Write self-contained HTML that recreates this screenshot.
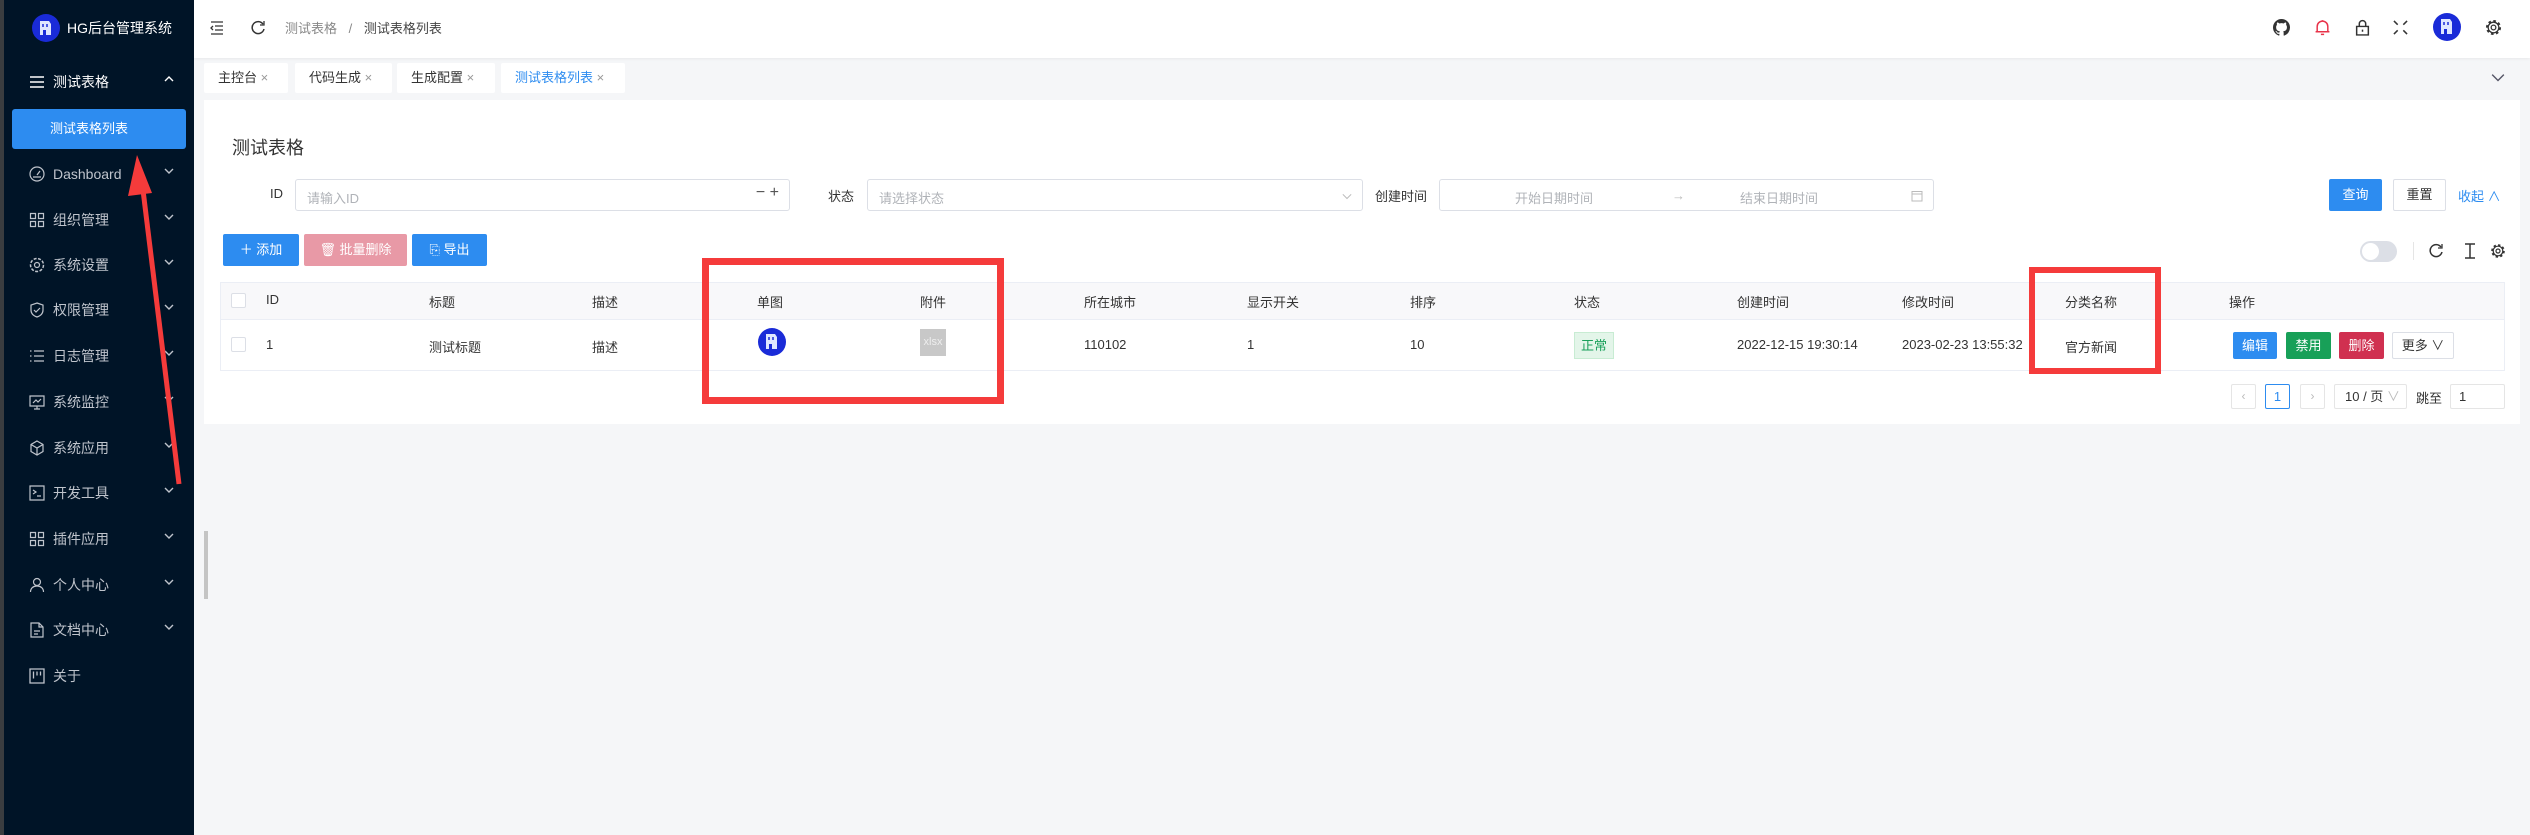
<!DOCTYPE html>
<html><head><meta charset="utf-8"><style>
*{margin:0;padding:0;box-sizing:border-box}
body{width:2530px;height:835px;overflow:hidden;background:#f5f6f8;font-family:"Liberation Sans","Noto Sans CJK SC",sans-serif;font-size:14px;color:#333;position:relative}
.a{position:absolute}
.side{left:0;top:0;width:194px;height:835px;background:#001427}
.strip{left:0;top:0;width:4px;height:835px;background:#3a3d40}
.mi{position:absolute;left:0;width:194px;height:20px;color:#bfc4cc;font-size:14px;line-height:20px}
.mi .ic{position:absolute;left:29px;top:2px;width:16px;height:16px}
.mi .tx{position:absolute;left:53px;top:0}
.mi .ch{position:absolute;left:163px;top:1px;width:12px;height:12px}
.hdr{left:194px;top:0;width:2336px;height:58px;background:#fff;box-shadow:0 1px 3px rgba(0,0,0,.06)}
.tab{position:absolute;top:63px;height:30px;background:#fff;border-radius:2px;font-size:13px;line-height:30px;color:#333;padding-left:14px}
.card{left:204px;top:100px;width:2316px;height:324px;background:#fff}
.inp{position:absolute;border:1px solid #dcdfe6;border-radius:3px;background:#fff;color:#b0b3b8;font-size:13px}
.btn{position:absolute;border-radius:2px;color:#fff;font-size:13px;text-align:center}
.th{position:absolute;top:292px;font-size:13px;color:#333}
.td{position:absolute;top:337px;font-size:13px;color:#333}
.cb{position:absolute;width:15px;height:15px;border:1px solid #dcdfe6;border-radius:2px;background:#fff}
</style></head><body>
<div class="a side"></div><div class="a strip"></div>
<svg class="a" style="left:31px;top:13px" width="30" height="30" viewBox="0 0 30 30"><circle cx="15" cy="15" r="14" fill="#1a2bd8"/><path d="M9 8h9l2 3v11h-5v-5h-3v5H9z" fill="#dfe6ff"/><path d="M12 11v3M16 11v3" stroke="#1a2bd8" stroke-width="1.5"/></svg>
<div class="a" style="left:67px;top:18px;color:#fff;font-size:14px">HG后台管理系统</div>

<div class="mi" style="top:72px;color:#fff"><svg class="ic" viewBox="0 0 16 16"><path d="M1 3h14M1 8h14M1 13h14" stroke="#fff" stroke-width="1.5"/></svg><span class="tx">测试表格</span><svg class="ch" viewBox="0 0 12 12"><path d="M2 8l4-4 4 4" stroke="#fff" fill="none" stroke-width="1.4"/></svg></div>
<div class="a" style="left:12px;top:109px;width:174px;height:40px;background:#2d8cf0;border-radius:3px;color:#fff;font-size:13px;line-height:40px;padding-left:38px">测试表格列表</div>

<div class="mi" style="top:164px"><svg class="ic" viewBox="0 0 16 16"><circle cx="8" cy="8" r="7" stroke="#bfc4cc" fill="none" stroke-width="1.2"/><path d="M8 9l3-4M4 11h8" stroke="#bfc4cc" stroke-width="1.2"/></svg><span class="tx">Dashboard</span><svg class="ch" viewBox="0 0 12 12"><path d="M2 4l4 4 4-4" stroke="#bfc4cc" fill="none" stroke-width="1.4"/></svg></div>
<div class="mi" style="top:210px"><svg class="ic" viewBox="0 0 16 16"><path d="M1.5 1.5h5v5h-5zM9.5 1.5h5v5h-5zM1.5 9.5h5v5h-5zM9.5 9.5h5v5h-5z" stroke="#bfc4cc" fill="none" stroke-width="1.2"/></svg><span class="tx">组织管理</span><svg class="ch" viewBox="0 0 12 12"><path d="M2 4l4 4 4-4" stroke="#bfc4cc" fill="none" stroke-width="1.4"/></svg></div>
<div class="mi" style="top:255px"><svg class="ic" viewBox="0 0 16 16"><circle cx="8" cy="8" r="6.5" stroke="#bfc4cc" fill="none" stroke-width="1.5" stroke-dasharray="3 1.5"/><circle cx="8" cy="8" r="2.5" stroke="#bfc4cc" fill="none" stroke-width="1.2"/></svg><span class="tx">系统设置</span><svg class="ch" viewBox="0 0 12 12"><path d="M2 4l4 4 4-4" stroke="#bfc4cc" fill="none" stroke-width="1.4"/></svg></div>
<div class="mi" style="top:300px"><svg class="ic" viewBox="0 0 16 16"><path d="M8 1l6 2v5c0 4-3 6-6 7-3-1-6-3-6-7V3z" stroke="#bfc4cc" fill="none" stroke-width="1.2"/><path d="M5 8l2 2 4-4" stroke="#bfc4cc" fill="none" stroke-width="1.2"/></svg><span class="tx">权限管理</span><svg class="ch" viewBox="0 0 12 12"><path d="M2 4l4 4 4-4" stroke="#bfc4cc" fill="none" stroke-width="1.4"/></svg></div>
<div class="mi" style="top:346px"><svg class="ic" viewBox="0 0 16 16"><path d="M5 3h10M5 8h10M5 13h10M1 3h1.5M1 8h1.5M1 13h1.5" stroke="#bfc4cc" stroke-width="1.3"/></svg><span class="tx">日志管理</span><svg class="ch" viewBox="0 0 12 12"><path d="M2 4l4 4 4-4" stroke="#bfc4cc" fill="none" stroke-width="1.4"/></svg></div>
<div class="mi" style="top:392px"><svg class="ic" viewBox="0 0 16 16"><path d="M1 2h14v10H1zM5 15h6M8 12v3M4 9l3-3 2 2 3-3" stroke="#bfc4cc" fill="none" stroke-width="1.2"/></svg><span class="tx">系统监控</span><svg class="ch" viewBox="0 0 12 12"><path d="M2 4l4 4 4-4" stroke="#bfc4cc" fill="none" stroke-width="1.4"/></svg></div>
<div class="mi" style="top:438px"><svg class="ic" viewBox="0 0 16 16"><path d="M8 1l6 3.5v7L8 15l-6-3.5v-7zM2 4.5L8 8l6-3.5M8 8v7" stroke="#bfc4cc" fill="none" stroke-width="1.2"/></svg><span class="tx">系统应用</span><svg class="ch" viewBox="0 0 12 12"><path d="M2 4l4 4 4-4" stroke="#bfc4cc" fill="none" stroke-width="1.4"/></svg></div>
<div class="mi" style="top:483px"><svg class="ic" viewBox="0 0 16 16"><path d="M1 1h14v14H1zM4 5l3 2-3 2M8 11h4" stroke="#bfc4cc" fill="none" stroke-width="1.2"/></svg><span class="tx">开发工具</span><svg class="ch" viewBox="0 0 12 12"><path d="M2 4l4 4 4-4" stroke="#bfc4cc" fill="none" stroke-width="1.4"/></svg></div>
<div class="mi" style="top:529px"><svg class="ic" viewBox="0 0 16 16"><path d="M1.5 1.5h5v5h-5zM9.5 1.5h5v5h-5zM1.5 9.5h5v5h-5zM9.5 9.5h5v5h-5z" stroke="#bfc4cc" fill="none" stroke-width="1.2"/></svg><span class="tx">插件应用</span><svg class="ch" viewBox="0 0 12 12"><path d="M2 4l4 4 4-4" stroke="#bfc4cc" fill="none" stroke-width="1.4"/></svg></div>
<div class="mi" style="top:575px"><svg class="ic" viewBox="0 0 16 16"><circle cx="8" cy="5" r="3.5" stroke="#bfc4cc" fill="none" stroke-width="1.2"/><path d="M1.5 15c0-4 3-6 6.5-6s6.5 2 6.5 6" stroke="#bfc4cc" fill="none" stroke-width="1.2"/></svg><span class="tx">个人中心</span><svg class="ch" viewBox="0 0 12 12"><path d="M2 4l4 4 4-4" stroke="#bfc4cc" fill="none" stroke-width="1.4"/></svg></div>
<div class="mi" style="top:620px"><svg class="ic" viewBox="0 0 16 16"><path d="M2 1h8l4 4v10H2zM10 1v4h4M5 9h6M5 12h4" stroke="#bfc4cc" fill="none" stroke-width="1.2"/></svg><span class="tx">文档中心</span><svg class="ch" viewBox="0 0 12 12"><path d="M2 4l4 4 4-4" stroke="#bfc4cc" fill="none" stroke-width="1.4"/></svg></div>
<div class="mi" style="top:666px"><svg class="ic" viewBox="0 0 16 16"><path d="M1 1h14v14H1zM4.5 3.5v7M8 3.5v4M11.5 3.5v4" stroke="#bfc4cc" fill="none" stroke-width="1.3"/></svg><span class="tx">关于</span></div>

<div class="a" style="left:204px;top:531px;width:4px;height:68px;background:#c4c4c4"></div>

<div class="a hdr"></div>
<svg class="a" style="left:209px;top:20px" width="16" height="16" viewBox="0 0 16 16"><path d="M2 2h12M6 6h8M6 10h8M2 14h12M4 6L2 8l2 2" stroke="#333" fill="none" stroke-width="1.3"/></svg>
<svg class="a" style="left:250px;top:20px" width="16" height="16" viewBox="0 0 16 16"><path d="M13 4A6 6 0 1 0 14 9" stroke="#333" fill="none" stroke-width="1.5"/><path d="M14 1v4h-4" stroke="#333" fill="none" stroke-width="1.3"/></svg>
<div class="a" style="left:285px;top:18px;font-size:13px;color:#888">测试表格 <span style="margin:0 8px">/</span> <span style="color:#444">测试表格列表</span></div>
<svg class="a" style="left:2273px;top:19px" width="17" height="17" viewBox="0 0 16 16"><path fill="#333" d="M8 0C3.58 0 0 3.58 0 8c0 3.54 2.29 6.53 5.47 7.59.4.07.55-.17.55-.38v-1.33c-2.23.48-2.7-1.07-2.7-1.07-.36-.93-.89-1.17-.89-1.17-.73-.5.06-.49.06-.49.8.06 1.23.83 1.23.83.72 1.23 1.88.87 2.34.67.07-.52.28-.87.51-1.07-1.78-.2-3.64-.89-3.64-3.95 0-.87.31-1.59.82-2.15-.08-.2-.36-1.02.08-2.12 0 0 .67-.21 2.2.82a7.6 7.6 0 0 1 4 0c1.53-1.04 2.2-.82 2.2-.82.44 1.1.16 1.92.08 2.12.51.56.82 1.27.82 2.15 0 3.07-1.87 3.75-3.65 3.95.29.25.54.73.54 1.48v2.2c0 .21.15.46.55.38A8 8 0 0 0 16 8c0-4.42-3.58-8-8-8z"/></svg>
<svg class="a" style="left:2314px;top:19px" width="17" height="17" viewBox="0 0 16 16"><path d="M3 12V7a5 5 0 0 1 10 0v5zM1.5 12h13M6.5 14.5h3M8 1v1" stroke="#e8334a" fill="none" stroke-width="1.4"/></svg>
<svg class="a" style="left:2354px;top:19px" width="17" height="17" viewBox="0 0 16 16"><path d="M2.5 7h11v8h-11zM5 7V4.5a3 3 0 0 1 6 0V7" stroke="#333" fill="none" stroke-width="1.4"/><rect x="7.3" y="10" width="1.4" height="2" fill="#333"/></svg>
<svg class="a" style="left:2393px;top:20px" width="15" height="15" viewBox="0 0 16 16"><path d="M1 1l4 4M15 1l-4 4M1 15l4-4M15 15l-4-4" stroke="#333" stroke-width="1.6"/></svg>
<svg class="a" style="left:2432px;top:12px" width="30" height="30" viewBox="0 0 30 30"><circle cx="15" cy="15" r="14" fill="#1a2bd8"/><path d="M9 7h9l2 3v12h-5v-5h-3v5H9z" fill="#dfe6ff"/><path d="M12 10v3M16 10v3" stroke="#1a2bd8" stroke-width="1.5"/></svg>
<svg class="a" style="left:2485px;top:19px" width="17" height="17" viewBox="0 0 16 16"><circle cx="8" cy="8" r="5.8" stroke="#333" fill="none" stroke-width="2.6" stroke-dasharray="2.3 2.2"/><circle cx="8" cy="8" r="4.8" stroke="#fff" fill="#fff" stroke-width="0"/><circle cx="8" cy="8" r="5" stroke="#333" fill="none" stroke-width="1.2"/><circle cx="8" cy="8" r="2.2" stroke="#333" fill="none" stroke-width="1.2"/></svg>

<div class="tab" style="left:204px;width:84px">主控台 <span style="color:#999">×</span></div>
<div class="tab" style="left:295px;width:97px">代码生成 <span style="color:#999">×</span></div>
<div class="tab" style="left:397px;width:98px">生成配置 <span style="color:#999">×</span></div>
<div class="tab" style="left:501px;width:124px;color:#2d8cf0">测试表格列表 <span style="color:#999">×</span></div>
<svg class="a" style="left:2491px;top:70px" width="14" height="14" viewBox="0 0 12 12"><path d="M1 4l5 5 5-5" stroke="#556" fill="none" stroke-width="1.2"/></svg>

<div class="a card"></div>
<div class="a" style="left:232px;top:134px;font-size:18px;color:#333">测试表格</div>
<div class="a" style="left:270px;top:186px;font-size:13px">ID</div>
<div class="inp" style="left:295px;top:179px;width:495px;height:32px;padding:8px 11px">请输入ID<span style="position:absolute;right:10px;top:4px;color:#555;font-size:16px">− +</span></div>
<div class="a" style="left:828px;top:186px;font-size:13px">状态</div>
<div class="inp" style="left:867px;top:179px;width:496px;height:32px;padding:8px 11px">请选择状态<svg style="position:absolute;right:10px;top:11px" width="10" height="10" viewBox="0 0 12 12"><path d="M1 4l5 5 5-5" stroke="#bbb" fill="none" stroke-width="1.2"/></svg></div>
<div class="a" style="left:1375px;top:186px;font-size:13px">创建时间</div>
<div class="inp" style="left:1439px;top:179px;width:495px;height:32px;padding:8px 0"><span style="position:absolute;left:75px">开始日期时间</span><span style="position:absolute;left:232px;color:#bbb">→</span><span style="position:absolute;left:300px">结束日期时间</span><svg style="position:absolute;right:10px;top:10px" width="12" height="12" viewBox="0 0 12 12"><rect x="1" y="1.5" width="10" height="9.5" stroke="#bbb" fill="none"/><path d="M1 4h10" stroke="#bbb"/></svg></div>
<div class="btn" style="left:2329px;top:179px;width:53px;height:32px;background:#2d8cf0;line-height:32px">查询</div>
<div class="btn" style="left:2393px;top:179px;width:53px;height:32px;background:#fff;border:1px solid #dcdfe6;color:#333;line-height:30px">重置</div>
<div class="a" style="left:2458px;top:186px;font-size:13px;color:#2d8cf0">收起 ∧</div>

<div class="btn" style="left:223px;top:234px;width:76px;height:32px;background:#2d8cf0;line-height:32px">＋ 添加</div>
<div class="btn" style="left:304px;top:234px;width:103px;height:32px;background:#e899a6;line-height:32px">🗑 批量删除</div>
<div class="btn" style="left:412px;top:234px;width:75px;height:32px;background:#2d8cf0;line-height:32px">⎘ 导出</div>

<div class="a" style="left:2360px;top:241px;width:37px;height:21px;border-radius:11px;background:#dcdfe6"><div style="position:absolute;left:2px;top:2px;width:17px;height:17px;border-radius:50%;background:#fff"></div></div>
<div class="a" style="left:2413px;top:242px;width:1px;height:18px;background:#e5e5e5"></div>
<svg class="a" style="left:2428px;top:243px" width="16" height="16" viewBox="0 0 16 16"><path d="M13 4A6 6 0 1 0 14 9" stroke="#333" fill="none" stroke-width="1.5"/><path d="M14 1v4h-4" stroke="#333" fill="none" stroke-width="1.3"/></svg>
<svg class="a" style="left:2463px;top:243px" width="14" height="16" viewBox="0 0 14 16"><path d="M2 1h10M2 15h10M7 1v14" stroke="#333" stroke-width="1.5"/></svg>
<svg class="a" style="left:2490px;top:243px" width="16" height="16" viewBox="0 0 16 16"><circle cx="8" cy="8" r="5.5" stroke="#333" fill="none" stroke-width="2.6" stroke-dasharray="2.2 2.1"/><circle cx="8" cy="8" r="4.6" fill="#fff"/><circle cx="8" cy="8" r="4.8" stroke="#333" fill="none" stroke-width="1.2"/><circle cx="8" cy="8" r="2" stroke="#333" fill="none" stroke-width="1.2"/></svg>

<div class="a" style="left:220px;top:282px;width:2285px;height:89px;border:1px solid #ebeef5;background:#fff"></div>
<div class="a" style="left:221px;top:283px;width:2283px;height:37px;background:#f8f8fa;border-bottom:1px solid #ebeef5"></div>
<div class="cb" style="left:231px;top:293px"></div>
<div class="cb" style="left:231px;top:337px"></div>
<div class="th" style="left:266px">ID</div><div class="th" style="left:429px">标题</div><div class="th" style="left:592px">描述</div><div class="th" style="left:757px">单图</div><div class="th" style="left:920px">附件</div><div class="th" style="left:1084px">所在城市</div><div class="th" style="left:1247px">显示开关</div><div class="th" style="left:1410px">排序</div><div class="th" style="left:1574px">状态</div><div class="th" style="left:1737px">创建时间</div><div class="th" style="left:1902px">修改时间</div><div class="th" style="left:2065px">分类名称</div><div class="th" style="left:2229px">操作</div>
<div class="td" style="left:266px">1</div><div class="td" style="left:429px">测试标题</div><div class="td" style="left:592px">描述</div>
<svg class="a" style="left:757px;top:327px" width="30" height="30" viewBox="0 0 30 30"><circle cx="15" cy="15" r="14" fill="#1a2bd8"/><path d="M9 7h9l2 3v12h-5v-5h-3v5H9z" fill="#dfe6ff"/><path d="M12 10v3M16 10v3" stroke="#1a2bd8" stroke-width="1.5"/></svg>
<div class="a" style="left:920px;top:329px;width:26px;height:27px;background:#c8c8c8;color:#eee;font-size:11px;line-height:27px;text-align:center">xlsx</div>
<div class="td" style="left:1084px">110102</div><div class="td" style="left:1247px">1</div><div class="td" style="left:1410px">10</div>
<div class="a" style="left:1574px;top:332px;width:40px;height:27px;background:#e3f5e9;border:1px solid #c8ecd3;color:#19a05a;font-size:13px;line-height:25px;text-align:center">正常</div>
<div class="td" style="left:1737px">2022-12-15 19:30:14</div><div class="td" style="left:1902px">2023-02-23 13:55:32</div><div class="td" style="left:2065px">官方新闻</div>
<div class="btn" style="left:2233px;top:332px;width:44px;height:27px;background:#2d8cf0;line-height:27px">编辑</div>
<div class="btn" style="left:2286px;top:332px;width:45px;height:27px;background:#18a058;line-height:27px">禁用</div>
<div class="btn" style="left:2339px;top:332px;width:45px;height:27px;background:#d03050;line-height:27px">删除</div>
<div class="btn" style="left:2392px;top:332px;width:62px;height:27px;background:#fff;border:1px solid #dcdfe6;color:#333;line-height:25px">更多 ∨</div>

<div class="a" style="left:2231px;top:384px;width:25px;height:25px;border:1px solid #e5e5e5;border-radius:2px;color:#bbb;text-align:center;line-height:23px;font-size:12px">‹</div>
<div class="a" style="left:2265px;top:384px;width:25px;height:25px;border:1px solid #2d8cf0;border-radius:2px;color:#2d8cf0;text-align:center;line-height:23px;font-size:13px">1</div>
<div class="a" style="left:2300px;top:384px;width:25px;height:25px;border:1px solid #e5e5e5;border-radius:2px;color:#bbb;text-align:center;line-height:23px;font-size:12px">›</div>
<div class="a" style="left:2334px;top:384px;width:73px;height:25px;border:1px solid #e5e5e5;border-radius:2px;color:#333;line-height:23px;font-size:13px;padding-left:10px">10 / 页 <span style="color:#bbb">∨</span></div>
<div class="a" style="left:2416px;top:388px;font-size:13px">跳至</div>
<div class="a" style="left:2450px;top:384px;width:55px;height:25px;border:1px solid #e5e5e5;border-radius:2px;line-height:23px;font-size:13px;padding-left:8px">1</div>

<div class="a" style="left:702px;top:258px;width:302px;height:146px;border:7px solid #f53b3b"></div>
<div class="a" style="left:2029px;top:267px;width:132px;height:107px;border:6px solid #f53b3b"></div>
<svg class="a" style="left:0;top:0" width="260" height="500" viewBox="0 0 260 500"><path d="M179 484L143 190" stroke="#f53b3b" stroke-width="5"/><path d="M137 155L128 196L152 193z" fill="#f53b3b"/></svg>
</body></html>
